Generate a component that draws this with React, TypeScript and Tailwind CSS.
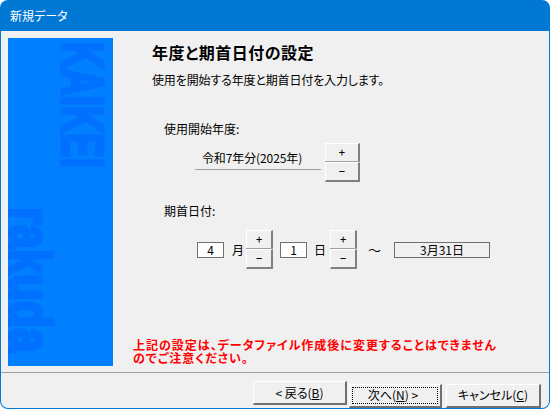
import React from 'react';

const Spinner = ({ w }: { w: string }) => (
  <div className={`flex flex-col shrink-0 h-[39px] ${w} text-[11px] leading-none font-medium text-black`}>
    <div className="flex-1 flex items-center justify-center bg-[#f0f0f0] border-t border-l border-white border-r-2 border-r-[#808080]">+</div>
    <div className="h-px bg-[#a0a0a0]" />
    <div className="flex-1 flex items-center justify-center bg-[#f0f0f0] border-l border-white border-r-2 border-r-[#808080] border-b-2 border-b-[#808080] border-t border-t-white">−</div>
  </div>
);

const NumBox = ({ value }: { value: string }) => (
  <div className="w-[27px] h-[16px] bg-white border border-[#707070] flex items-center justify-center text-[12px] leading-none">{value}</div>
);

const NavButton = ({ label, focused, w }: { label: React.ReactNode; focused?: boolean; w: string }) => (
  <button className={`h-[24px] ${w} bg-[#f0f0f0] border-t border-l border-white border-r-2 border-b-2 border-r-[#707070] border-b-[#707070] text-[12px] leading-none p-[2px] text-black`}>
    <span className={`flex items-center justify-center w-full h-full ${focused ? 'border border-dotted border-black' : ''}`}>{label}</span>
  </button>
);

export default function App() {
  return (
    <div className="w-[550px] h-[409px] bg-white font-['Noto_Sans_CJK_JP','Noto_Sans',sans-serif] [font-feature-settings:'palt'] text-black">
      <div className="w-full h-full flex flex-col rounded-[8px] overflow-hidden bg-[#0078d4]">
        <div className="h-[31px] shrink-0 flex items-center pl-[10px] text-[12px] text-white">新規データ</div>
        <div className="flex-1 min-h-0 flex flex-col bg-[#f0f0f0] mx-px mb-px rounded-b-[7px] overflow-hidden">
          <div className="flex-1 min-h-0 flex pl-[7px] pt-[7px]">
            <div className="relative w-[105px] h-[328px] shrink-0 bg-[#0080ff]">
              <span className="absolute left-[52px] top-[4px] h-[45px] w-max origin-top-left translate-x-[45px] rotate-90 scale-x-[0.62] text-[60px] leading-[45px] font-bold font-['Liberation_Sans',sans-serif] [-webkit-text-stroke:3px_#0070ff] text-[#0070ff] whitespace-nowrap">KAIKEI</span>
              <span className="absolute left-0 top-[169px] h-[45px] w-max origin-top-left translate-x-[45px] rotate-90 scale-x-[0.74] text-[60px] leading-[45px] font-bold font-['Liberation_Sans',sans-serif] [-webkit-text-stroke:3px_#0070ff] text-[#0070ff] whitespace-nowrap">rakuda</span>
            </div>
            <div className="flex-1 flex flex-col min-w-0 pl-[20px] pb-[8px]">
              <div className="ml-[19px] mt-[3px]">
                <h1 className="text-[16px] leading-[22px] font-bold tracking-[0.5px]">年度と期首日付の設定</h1>
                <p className="mt-[10px] text-[12px] leading-[14px] tracking-[-0.15px]">使用を開始する年度と期首日付を入力します。</p>
              </div>
              <div className="ml-[31px] mt-[35px] text-[12px] leading-[14px]">使用開始年度:</div>
              <div className="flex ml-[62px] mt-[7px] items-start">
                <div className="w-[126px] h-[27px] border-b border-[#a0a0a0] flex items-end justify-center text-[12px] leading-[18px] pb-[2px] pr-[12px] whitespace-nowrap tracking-[-0.1px]">令和7年分(2025年)</div>
                <div className="ml-[4px]"><Spinner w="w-[35px]" /></div>
              </div>
              <div className="ml-[31px] mt-[22px] text-[12px] leading-[14px]">期首日付:</div>
              <div className="flex items-center ml-[64px] mt-[12px] text-[12px] leading-none">
                <NumBox value="4" />
                <span className="ml-[8px] mr-[2px]">月</span>
                <Spinner w="w-[27px]" />
                <div className="ml-[7px]"><NumBox value="1" /></div>
                <span className="ml-[7px] mr-[4px]">日</span>
                <Spinner w="w-[27px]" />
                <span className="ml-[11px] text-[13px]">〜</span>
                <div className="ml-[13px] w-[96px] h-[16px] border border-[#707070] flex items-center justify-center">3月31日</div>
              </div>
              <p className="mt-auto text-[12px] leading-[13px] font-bold text-[#ff0000] whitespace-nowrap tracking-[1px]">
                上記の設定は、データファイル作成後に変更することはできません
                <br />
                のでご注意ください。
              </p>
            </div>
          </div>
          <div className="h-px bg-[#a0a0a0] shrink-0" />
          <div className="h-[35px] shrink-0 flex items-start justify-end pt-[8px] pr-[8px]">
            <NavButton w="w-[94px]" label={<>&lt; 戻る(<u>B</u>)</>} />
            <div className="ml-[2px]"><NavButton w="w-[93px]" focused label={<span className="pr-[4px]">次へ(<u>N</u>) &gt;</span>} /></div>
            <div className="ml-[4px]"><NavButton w="w-[95px]" label={<>キャンセル(<u>C</u>)</>} /></div>
          </div>
        </div>
      </div>
    </div>
  );
}
